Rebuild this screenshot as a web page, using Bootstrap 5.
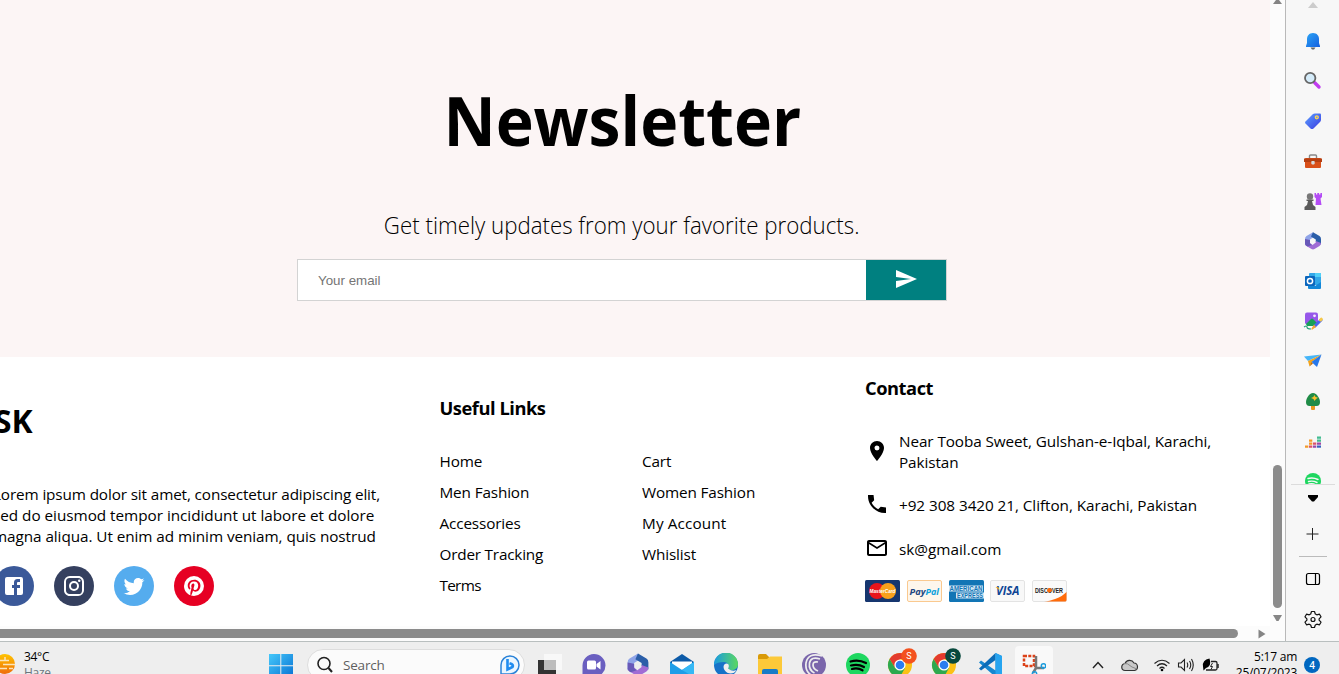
<!DOCTYPE html>
<html lang="en">
<head>
<meta charset="utf-8">
<title>SK Store</title>
<link href="https://cdn.jsdelivr.net/npm/bootstrap@5.3.0/dist/css/bootstrap.min.css" rel="stylesheet">
<script src="https://cdn.jsdelivr.net/npm/bootstrap@5.3.0/dist/js/bootstrap.bundle.min.js"></script>
<style>
  html, body { height: 100%; overflow: hidden; }
  body { font: 400 15.3px/21px "Open Sans", "Noto Sans", sans-serif; color: #000; background: #fff; }
  svg { display: block; flex: none; }
  ul { list-style: none; margin: 0; padding: 0; }
  .browser { height: 641px; }
  .view { width: 1270px; }
  .page { width: 1296px; margin-left: -26px; height: 626px; }

  .newsletter { height: 357px; background: #fcf5f5; padding-top: 75px; }
  .newsletter h1 { font-size: 68px; line-height: 90px; font-weight: 700; margin: 0 0 45px; transform: scaleX(.945); }
  .newsletter p { font-size: 23.6px; line-height: 30px; font-weight: 300; margin: 0 0 19px; transform: scaleX(.945); }
  .mailbox { width: 650px; height: 42px; border: 1px solid lightgray; background: #fff; }
  .mailbox input { border: 0; padding: 1px 0 0 20px; font: 13.33px "Liberation Sans", Arial, sans-serif; outline: 0; }
  .mailbox input::placeholder { color: #757575; opacity: 1; }
  .mailbox button { width: 80px; background: teal; border: 0; padding: 0 0 2px; }

  .foot { display: grid; grid-template-columns: 446px 425px 425px; height: 269px; }
  .foot h3 { font-size: 18.3px; line-height: 25px; font-weight: 700; margin: 0; letter-spacing: -.46px; }
  .brand { padding: 43px 20px 0; }
  .brand h2 { font-size: 31.8px; line-height: 42px; font-weight: 700; margin: 0 0 42px; }
  .brand p { margin: 0 0 19px -1px; }
  .brand p span { display: block; white-space: nowrap; }
  .social { gap: 20px; }
  .social a { width: 40px; height: 40px; border-radius: 50%; }
  .social svg { fill: #fff; }
  .useful { padding: 38px 0 0 19.5px; }
  .useful ul { display: grid; grid-template-columns: 202.5px 1fr; row-gap: 10px; margin-top: 31px; letter-spacing: -.14px; }
  .contact { padding: 18px 0 0 20px; }
  .contact .line { gap: 10px; letter-spacing: -.09px; }
  .pay { gap: 6.8px; margin-top: 20px; }

  .vbar { width: 15px; background: #fcfcfc; }
  .vbar i { width: 9px; height: 143px; border-radius: 5px; background: #8b8b8b; margin: 459px 0 0 3px; }
  .hbar { height: 15px; background: #fcfcfc; }
  .hbar i { width: 1238px; height: 9px; border-radius: 0 5px 5px 0; background: #8b8b8b; }

  .side { width: 54px; background: #f7f7f7; border-left: 1px solid #b9b9b9; }
  .apps { height: 463px; overflow: hidden; padding-left: 1px; }
  .apps li { height: 40px; display: flex; align-items: center; justify-content: center; }

  .taskbar { height: 33px; background: #eee; border-top: 1px solid #b9bfbf; overflow: hidden; line-height: 16px; }
  .taskbar .inner { height: 46px; }
  .slot { width: 44px; height: 46px; display: flex; align-items: center; justify-content: center; }
  .find { width: 218px; height: 32px; border: 1px solid #ddd; border-radius: 16px; background: #fbfbfb; }
  .alert-dot { width: 16px; height: 16px; border-radius: 50%; background: #0067c0; color: #fff; font-size: 10px; font-weight: 600; }
</style>
</head>
<body class="d-flex flex-column">

<div class="browser d-flex">
  <div class="view overflow-hidden">
    <div class="page">
      <section class="newsletter d-flex flex-column align-items-center">
        <h1>Newsletter</h1>
        <p>Get timely updates from your favorite products.</p>
        <form class="mailbox d-flex">
          <input class="flex-grow-1" type="text" placeholder="Your email">
          <button type="button" class="d-flex align-items-center justify-content-center" aria-label="Send">
            <svg width="24" height="24" viewBox="0 0 24 24" fill="#fff"><path d="M2.01 21 23 12 2.01 3 2 10l15 2-15 2z"/></svg>
          </button>
        </form>
      </section>
      <footer class="foot">
        <div class="brand">
          <h2>SK</h2>
          <p><span style="letter-spacing:-.13px">Lorem ipsum dolor sit amet, consectetur adipiscing elit,</span><span style="letter-spacing:-.03px">sed do eiusmod tempor incididunt ut labore et dolore</span><span style="letter-spacing:-.07px">magna aliqua. Ut enim ad minim veniam, quis nostrud</span></p>
          <div class="social d-flex">
            <a class="d-flex align-items-center justify-content-center" style="background:#3b5999"><svg width="24" height="24" viewBox="0 0 24 24"><path d="M5 3h14a2 2 0 0 1 2 2v14a2 2 0 0 1-2 2H5a2 2 0 0 1-2-2V5a2 2 0 0 1 2-2m13 2h-2.5A3.5 3.5 0 0 0 12 8.5V11h-2v3h2v7h3v-7h3v-3h-3V9a1 1 0 0 1 1-1h2V5z"/></svg></a>
            <a class="d-flex align-items-center justify-content-center" style="background:#35405f"><svg width="24" height="24" viewBox="0 0 24 24"><path d="M7.8 2h8.4C19.4 2 22 4.6 22 7.8v8.4a5.8 5.8 0 0 1-5.8 5.8H7.8C4.6 22 2 19.4 2 16.2V7.8A5.8 5.8 0 0 1 7.8 2m-.2 2A3.6 3.6 0 0 0 4 7.6v8.8C4 18.39 5.61 20 7.6 20h8.8a3.6 3.6 0 0 0 3.6-3.6V7.6C20 5.61 18.39 4 16.4 4H7.6m9.65 1.5a1.25 1.25 0 1 1 0 2.5 1.25 1.25 0 0 1 0-2.5M12 7a5 5 0 1 1 0 10 5 5 0 0 1 0-10m0 2a3 3 0 1 0 0 6 3 3 0 0 0 0-6z"/></svg></a>
            <a class="d-flex align-items-center justify-content-center" style="background:#55acee"><svg width="24" height="24" viewBox="0 0 24 24"><path d="M22.46 6c-.77.35-1.6.58-2.46.69.88-.53 1.56-1.37 1.88-2.38-.83.5-1.75.85-2.72 1.05C18.37 4.5 17.26 4 16 4c-2.35 0-4.27 1.92-4.27 4.29 0 .34.04.67.11.98C8.28 9.09 5.11 7.38 3 4.79c-.37.63-.58 1.37-.58 2.15 0 1.49.75 2.81 1.91 3.56-.71 0-1.37-.2-1.95-.5v.03c0 2.08 1.48 3.82 3.44 4.21a4.22 4.22 0 0 1-1.93.07 4.28 4.28 0 0 0 4 2.98 8.521 8.521 0 0 1-5.33 1.84c-.34 0-.68-.02-1.02-.06C3.44 20.29 5.7 21 8.12 21 16 21 20.33 14.46 20.33 8.79c0-.19 0-.37-.01-.56.84-.6 1.56-1.36 2.14-2.23z"/></svg></a>
            <a class="d-flex align-items-center justify-content-center" style="background:#e60023"><svg width="24" height="24" viewBox="0 0 24 24"><path d="M9.04 21.54c.96.29 1.93.46 2.96.46a10 10 0 0 0 10-10A10 10 0 0 0 12 2 10 10 0 0 0 2 12c0 4.25 2.67 7.9 6.44 9.34-.09-.78-.18-2.07 0-2.96l1.15-4.94s-.29-.58-.29-1.5c0-1.38.86-2.41 1.84-2.41.86 0 1.26.63 1.26 1.44 0 .86-.57 2.09-.86 3.27-.17.98.52 1.84 1.52 1.84 1.78 0 3.16-1.9 3.16-4.58 0-2.4-1.72-4.04-4.19-4.04-2.82 0-4.48 2.1-4.48 4.31 0 .86.28 1.73.74 2.3.09.06.09.14.06.29l-.29 1.09c0 .17-.11.23-.28.11-1.28-.56-2.02-2.38-2.02-3.85 0-3.16 2.24-6.03 6.56-6.03 3.44 0 6.12 2.47 6.12 5.75 0 3.44-2.13 6.2-5.18 6.2-.97 0-1.92-.52-2.26-1.13l-.67 2.37c-.23.86-.86 2.01-1.29 2.7v-.03z"/></svg></a>
          </div>
        </div>
        <div class="useful">
          <h3>Useful Links</h3>
          <ul>
            <li>Home</li><li>Cart</li>
            <li>Men Fashion</li><li>Women Fashion</li>
            <li>Accessories</li><li style="letter-spacing:.12px">My Account</li>
            <li style="letter-spacing:-.2px">Order Tracking</li><li>Whislist</li>
            <li style="letter-spacing:-.7px">Terms</li>
          </ul>
        </div>
        <div class="contact">
          <h3>Contact</h3>
          <div class="line d-flex align-items-center" style="margin-top:31px"><svg style="margin-top:-2px" width="24" height="24" viewBox="0 0 24 24"><path d="M12 2C8.13 2 5 5.13 5 9c0 5.25 7 13 7 13s7-7.75 7-13c0-3.87-3.13-7-7-7zm0 9.5a2.5 2.5 0 0 1 0-5 2.5 2.5 0 0 1 0 5z"/></svg><span>Near Tooba Sweet, Gulshan-e-Iqbal, Karachi,<br>Pakistan</span></div>
          <div class="line d-flex align-items-center" style="margin-top:18px;letter-spacing:-.06px"><svg width="24" height="24" viewBox="0 0 24 24"><path d="m21 15.46-5.27-.61-2.52 2.52c-2.83-1.44-5.15-3.75-6.59-6.59l2.53-2.53L8.54 3H3.03C2.45 13.18 10.82 21.55 21 20.97v-5.51z"/></svg><span class="pt-1">+92 308 3420 21, Clifton, Karachi, Pakistan</span></div>
          <div class="line d-flex align-items-center" style="margin-top:19px;letter-spacing:0"><svg width="24" height="24" viewBox="0 0 24 24"><path d="M20 4H4c-1.1 0-2 .9-2 2v12c0 1.1.9 2 2 2h16c1.1 0 2-.9 2-2V6c0-1.1-.9-2-2-2zm0 14H4V8l8 5 8-5v10zm-8-7L4 6h16l-8 5z"/></svg><span class="pt-1">sk@gmail.com</span></div>
          <div class="pay d-flex">
            <svg width="35" height="22" viewBox="0 0 35 22"><rect width="35" height="22" rx="1.5" fill="#16366f"/><circle cx="12" cy="11" r="8" fill="#e8141b"/><circle cx="23" cy="11" r="8" fill="#f9a01b"/><text x="4.500" y="13.400" font-family="Liberation Sans" font-size="6" font-weight="700" font-style="italic" fill="#fff" textLength="26" lengthAdjust="spacingAndGlyphs">MasterCard</text></svg>
            <svg width="35" height="22" viewBox="0 0 35 22"><rect x=".5" y=".5" width="34" height="21" rx="1.5" fill="#fdf6ec" stroke="#fac98f"/><text x="2.5" y="14.5" font-family="Open Sans" font-size="9.5" font-weight="700" font-style="italic" fill="#20457f" textLength="16" lengthAdjust="spacingAndGlyphs">Pay</text><text x="18.500" y="14.5" font-family="Open Sans" font-size="9.5" font-weight="700" font-style="italic" fill="#0aa0dc" textLength="13.500" lengthAdjust="spacingAndGlyphs">Pal</text></svg>
            <svg width="35" height="22" viewBox="0 0 35 22"><rect width="35" height="22" rx="1.5" fill="#1275b5"/><path d="M0 5.500h34v6H0z M7 12.500h28v6H7z" fill="#d3e8f5"/><text x="0.500" y="11" font-family="Liberation Sans" font-size="7" font-weight="700" fill="#1275b5" textLength="33" lengthAdjust="spacingAndGlyphs">AMERICAN</text><text x="8" y="18" font-family="Liberation Sans" font-size="7" font-weight="700" fill="#1275b5" textLength="26" lengthAdjust="spacingAndGlyphs">EXPRESS</text></svg>
            <svg width="35" height="22" viewBox="0 0 35 22"><rect x=".5" y=".5" width="34" height="21" rx="1.5" fill="#f8f8f8" stroke="#e3e3e3"/><text x="6" y="15.3" font-family="Open Sans" font-size="11.5" font-weight="700" font-style="italic" fill="#0e4595" textLength="23.5" lengthAdjust="spacingAndGlyphs">VISA</text><path d="m5.5 7 3 .2 1 3z" fill="#f2ae14"/></svg>
            <svg width="35" height="22" viewBox="0 0 35 22"><rect x=".5" y=".5" width="34" height="21" rx="1.5" fill="#fafafa" stroke="#e3e3e3"/><path d="M34.5 12C29 18 19 21 12 21.5h21q1.500 0 1.500-1.500z" fill="#ff6b0a"/><text x="3" y="12.500" font-family="Liberation Sans" font-size="6.600" font-weight="700" fill="#222" textLength="28" lengthAdjust="spacingAndGlyphs">DISCOVER</text><circle cx="17.500" cy="10.200" r="2.300" fill="#ff6b0a"/></svg>
          </div>
        </div>
      </footer>
    </div>
    <div class="hbar d-flex align-items-center"><i></i></div>
  </div>
  <div class="vbar d-flex flex-column">
    <svg width="15" height="6" viewBox="0 0 15 6"><path d="M7.500 -2 12 4H3z" fill="#858585"/></svg>
    <i></i>
    <svg class="mt-1" width="15" height="12" viewBox="0 0 15 12"><path d="M3 3h9L8.500 9h-2z" fill="#858585"/></svg>
    <svg style="margin:4px 0 0 -14px" width="15" height="12" viewBox="0 0 15 12"><path d="M2.500 1.500v9L9.500 6z" fill="#858585"/></svg>
  </div>

  <aside class="side">
    <svg width="53" height="21" viewBox="0 0 53 21"><path d="m27 2 5 6H22z" fill="#ccc"/></svg>
    <ul class="apps">
      <li><svg width="20" height="20" viewBox="0 0 20 20"><defs><linearGradient id="bell" x2="1" y2="1"><stop stop-color="#2ba5f5"/><stop offset="1" stop-color="#1660e0"/></linearGradient></defs><path d="M10 2C6 2 4 5 4 8v4l-1 3v1h14v-1l-1-3V8c0-3-2-6-6-6z" fill="url(#bell)"/><path d="M7.500 16.500h5l-1.500 2H9z" fill="#666"/></svg></li>
      <li><svg width="20" height="20" viewBox="0 0 20 20"><path d="m11.500 11.500 4.500 4.500" stroke="#c03cf0" stroke-width="3.400" stroke-linecap="round"/><circle cx="7.200" cy="7" r="5.200" fill="#d5ecfa" stroke="#666" stroke-width="1.800"/></svg></li>
      <li><svg width="20" height="20" viewBox="0 0 20 20"><defs><linearGradient id="tag" x2="1" y2="1"><stop stop-color="#5ba0ff"/><stop offset="1" stop-color="#3b3be0"/></linearGradient></defs><path d="m2.500 10.500 7-7q1-1 2.500-1h5q1 0 1 1v5q0 1.500-1 2.500l-6.500 6.500q-1.500 1-3 0l-5-5q-1-1 0-2z" fill="url(#tag)"/><circle cx="13.800" cy="6.300" r="1.500" fill="#6e8cf8" stroke="#ffd84a" stroke-width="1.300"/></svg></li>
      <li><svg width="20" height="20" viewBox="0 0 20 20"><path d="M6.500 7V5q0-1 1-1h5q1 0 1 1v2" fill="none" stroke="#888" stroke-width="1.400"/><rect x="2" y="7" width="16" height="10" rx="1" fill="#d9501a"/><path d="M1 7.500h18v3.500H1z" fill="#b53f12"/><rect x="8.300" y="10" width="3.400" height="3.400" rx=".8" fill="#d5d8da"/></svg></li>
      <li><svg width="20" height="20" viewBox="0 0 20 20"><path d="M11.500 2H13v1.500h1.300V2h1.800v1.500h1.300V2H19v4l-1.500 1.500L18.500 14h-6L13 7.500 11.500 6z" fill="#b44cf5"/><circle cx="7" cy="5.500" r="3.200" fill="#777"/><path d="M3.500 8.500h7v1.500H9l1 4 2.500 2v3H1.500v-3l2.500-2 1-4H3.500z" fill="#5a5a5a"/></svg></li>
      <li><svg width="20" height="20" viewBox="0 0 20 20"><g id="m365"><path d="M10 1.200 3.500 5Q2 6 2 8v6l5-1.500V8.500L12.500 5z" fill="#8fa4e8"/><path d="m10 1.200 6.500 3.800Q18 6 18 8v5.500L12.800 11V8.500L8 5.500z" fill="#2b5ea8"/><path d="M2 12.500q0 1.500 1.500 2.500L8.500 18q1.500.9 3 0l5-3q1.500-1 1.500-3l-5.200-2v1.500L9.500 14 7 12z" fill="#a06cd5"/><path d="m2 8 5 1v3.500L9 14l-4.500 1.500Q2 14.500 2 12.500z" fill="#6859b8"/></g></svg></li>
      <li><svg width="20" height="20" viewBox="0 0 20 20"><rect x="6" y="2" width="12" height="12" rx="1" fill="#32a7e8"/><path d="M12 2h6v4h-6z" fill="#50d0f8"/><path d="m5 11 7 4 6-4v6q0 1-1 1H6q-1 0-1-1z" fill="#1387d8"/><rect x="2" y="5" width="10" height="10" rx="1" fill="#0a66bd"/><circle cx="7" cy="10" r="2.600" fill="none" stroke="#fff" stroke-width="1.500"/></svg></li>
      <li><svg width="20" height="20" viewBox="0 0 20 20"><rect x="2" y="1.500" width="13" height="12" rx="2" fill="#9657ea"/><circle cx="11.500" cy="4.800" r="1.400" fill="#f3e8ff"/><path d="m3 13 5-5q1-1 2 0l4 4-2 3H4z" fill="#18a058"/><path d="m18 9-6 6" stroke="#4766ee" stroke-width="3" stroke-linecap="round"/><path d="m17.500 9 .800-.8" stroke="#f7c948" stroke-width="3" stroke-linecap="round"/><path d="m11 13.500-2.500 4q-.5 1.500 1 1l3.500-2.500z" fill="#f3a536"/><path d="M1 16q3-2 3 0t4 2" fill="none" stroke="#28a37a" stroke-width="1.200"/></svg></li>
      <li><svg width="20" height="20" viewBox="0 0 20 20"><path d="M18.500 3.500 1 5.500 5 10z" fill="#45b5f8"/><path d="M18.500 3.500 5 10l1.500 5.500L9 11z" fill="#f3a41c"/><path d="M18.500 3.500 8.500 11l5.500 5z" fill="#2677ea"/><path d="m6.500 15.500 3.500-3-1.500-1.500z" fill="#bd6e10"/></svg></li>
      <li><svg width="20" height="20" viewBox="0 0 20 20"><path d="M8 13h4v5.500q-2 1-4 0z" fill="#e99a20"/><path d="M10 2c4 0 7 6 7 9q0 4-3.500 4h-7Q3 15 3 11c0-3 3-9 7-9z" fill="#208c47"/><path d="m11.500 4 1 2 2.500.7-2 1.400-1.500 2-1-2.200L8 7l2.300-1z" fill="#fbc02d"/></svg></li>
      <li><svg width="20" height="20" viewBox="0 0 20 20"><path d="M2 14.500h3.300v2.200H2zM6 11.500h3.300v2.200H6zM6 8.500h3.300v2.200H6z" fill="#f49a28"/><path d="M6 14.500h3.300v2.200H6zM10 11.500h3.300v2.200H10z" fill="#dc5368"/><path d="M10 14.500h3.300v2.200H10zM14 11.500h4v2.200h-4z" fill="#9a48a8"/><path d="M14 14.500h4v2.200h-4z" fill="#3862bd"/><path d="M14 8.500h4v2.200h-4zM14 5.500h4v2.200h-4z" fill="#42bc90"/></svg></li>
      <li><svg width="20" height="20" viewBox="0 0 20 20"><circle cx="10" cy="10" r="8" fill="#1ed760"/><path d="M5 7.500q5-1.500 10 1M5.500 10.500q4.500-1 8.500 1M6 13q4-1 7 1" fill="none" stroke="#f7f7f7" stroke-width="1.400" stroke-linecap="round"/></svg></li>
    </ul>
    <svg width="53" height="157" viewBox="0 0 53 157"><path d="M13 72.500h28" stroke="#bbb"/><path d="M5 -.5h44" stroke="#d0d0d0"/><path d="M5 .2h44" stroke="#d0d0d0"/><path d="M22 11h10v2l-4 4.500h-2L22 13z" fill="#000"/><path d="M26.500 44v12M20.500 50h12" stroke="#222"/><rect x="20.500" y="89.500" width="13" height="11" rx="2" fill="none" stroke="#000" stroke-width="1.200"/><path d="M29.500 89.500v11" stroke="#000" stroke-width="1.200"/>
      <g fill="none" stroke="#111" stroke-width="1.200" stroke-linejoin="round"><path d="m25.500 127.500 3 0 .8 2.500 1.500.8 2.700-.6 1.500 2.600-1.900 2v1.400l1.900 2-1.500 2.600-2.700-.6-1.500.8-.8 2.500h-3l-.8-2.500-1.500-.8-2.700.6-1.500-2.600 1.900-2v-1.400l-1.900-2 1.500-2.600 2.700.6 1.500-.8z"/><circle cx="27" cy="135.500" r="2"/></g></svg>
  </aside>
</div>

<div class="taskbar">
  <div class="inner d-flex align-items-center">
    <svg width="15" height="22" viewBox="0 0 15 22"><defs><linearGradient id="sun" x2="0" y2="1"><stop stop-color="#ffc400"/><stop offset="1" stop-color="#ef6c0a"/></linearGradient></defs><circle cx="5" cy="10" r="10" fill="url(#sun)"/><path d="M-1 6.500h10M3 10.500h12M-1 14.500h8M9 14.500h4M5 3v3" stroke="#fbe5bd" stroke-width="1.500"/></svg>
    <div style="width:245px;padding:0 0 0 9px;font-size:12px;letter-spacing:-.3px"><div>34°C</div><div class="text-secondary">Haze</div></div>
    <svg width="47" height="24" viewBox="0 0 47 24"><defs><linearGradient id="win" x2="1" y2="1"><stop stop-color="#45c8fa"/><stop offset="1" stop-color="#0871d3"/></linearGradient></defs><path d="M9 1h11.300v11.300H9zM21.300 1h11.700v11.300H21.300zM9 13.300h11.300V25H9zM21.300 13.300H33V25H21.300z" fill="url(#win)"/></svg>
    <div class="find d-flex align-items-center px-2">
      <svg style="margin-left:-1px" width="20" height="20" viewBox="0 0 20 20"><circle cx="9" cy="8.500" r="6" fill="none" stroke="#222" stroke-width="1.600"/><path d="m13.500 13 3.500 4" stroke="#222" stroke-width="2"/></svg>
      <span class="flex-grow-1" style="padding-left:8px;font-size:13.500px;letter-spacing:-.2px;color:#5f5f5f">Search</span>
      <svg style="margin-right:-5px" width="22" height="22" viewBox="0 0 22 22"><path d="M2 20v-9a9 9 0 1 1 9 9z" fill="#eaf6ff" stroke="#2b83d8" stroke-width="1.500"/><path d="M8.500 5v10.500l5-2.500q1-2-1-3l-2-.7" fill="none" stroke="#1f8cf0" stroke-width="2.600"/></svg>
    </div>
    <div class="slot" style="margin-left:3px"><svg width="24" height="24" viewBox="0 0 24 24"><path d="M0 7h18v17H0z" fill="#333"/><path d="M6 1h18v16H6z" fill="#f8f8f8"/><path d="M6 7h12v10H6z" fill="#bcbcbc"/></svg></div>
    <div class="slot"><svg width="24" height="24" viewBox="0 0 24 24"><path d="M.5 24V12.500A11.500 11.500 0 1 1 12.500 24z" fill="#6a5fc0"/><rect x="5" y="7.500" width="9" height="9" rx="1.500" fill="#fff"/><path d="m14.500 11 4-3v8.500l-4-3z" fill="#fff"/></svg></div>
    <div class="slot"><svg width="26" height="26" viewBox="0 0 20 20"><use href="#m365"/></svg></div>
    <div class="slot"><svg width="24" height="24" viewBox="0 0 24 24"><path d="m0 9 12-8 12 8v5H0z" fill="#0d5aa7"/><path d="M2 8.500h20V16H2z" fill="#fff"/><path d="m0 9 12 8 12-8v15H0z" fill="#1f9ee8"/><path d="m12 17 12-8v15z" fill="#35b8f5"/></svg></div>
    <div class="slot"><svg width="24" height="24" viewBox="0 0 24 24"><defs><linearGradient id="edge" x2="1"><stop stop-color="#1a9ae0"/><stop offset="1" stop-color="#5bd860"/></linearGradient></defs><circle cx="12" cy="12" r="12" fill="#1672c8"/><path d="M0 12a12 12 0 0 1 24-1c0 4-3 6-6 6-2 0-4-.5-4-1.500 1-1 1.500-6-4-6.500Q3 9 0 12z" fill="url(#edge)"/><path d="M14 15.500c1.500-2 1-5-1.500-5s-4 3-2 6.500 6 4 9 3q2-1 3-3-4 2-8.500-1.500z" fill="#eee"/></svg></div>
    <div class="slot"><svg width="24" height="24" viewBox="0 0 24 24"><path d="M0 3q0-2 2-2h6l3 3v4H0z" fill="#d99a08"/><path d="M0 6h9l3-2.500h12V24H0z" fill="#fcc939"/><rect x="4" y="16" width="16" height="8" rx="2" fill="#187bc7"/></svg></div>
    <div class="slot"><svg width="24" height="24" viewBox="0 0 24 24"><circle cx="12" cy="12" r="12" fill="#7a66ab"/><g fill="none" stroke="#eee" stroke-width="1.700"><path d="M20 3Q6-1 4 10q-1 8 5 12"/><path d="M18 6Q9 3 7.500 10q-1 7 5 10"/><path d="M16 9q-5-1-5 3 0 4 5 6"/></g></svg></div>
    <div class="slot"><svg width="24" height="24" viewBox="0 0 24 24"><circle cx="12" cy="12" r="12" fill="#1ed760"/><path d="M4.500 8.500q8-2.500 15.500 1.500M5 12.500q7-2 13 1.500M6 16q6-1.500 10.500 1.300" fill="none" stroke="#000" stroke-width="2.200" stroke-linecap="round"/></svg></div>
    <div class="slot"><svg width="30" height="36" viewBox="1 0 30 36"><g id="chrome"><circle cx="14" cy="18" r="12" fill="#fbc116"/><path d="M3.600 12A12 12 0 0 1 24.400 12H14l-5 9z" fill="#e33b2e"/><path d="M3.600 12A12 12 0 0 0 14 30l5-9H9z" fill="#2da94f"/><circle cx="14" cy="18" r="5.600" fill="#fff"/><circle cx="14" cy="18" r="4.300" fill="#2b7cf0"/></g><circle cx="23" cy="9" r="7.800" fill="#f4511e"/><text x="23" y="12.300" font-family="Roboto" font-size="9" fill="#fff" text-anchor="middle">S</text></svg></div>
    <div class="slot"><svg width="30" height="36" viewBox="1 0 30 36"><use href="#chrome"/><circle cx="23" cy="9" r="7.800" fill="#08493d"/><text x="23" y="12.300" font-family="Roboto" font-size="9" fill="#fff" text-anchor="middle">S</text></svg></div>
    <div class="slot"><svg width="24" height="24" viewBox="0 0 24 24"><path d="M17.500 0 24 3v18l-6.500 3L1 9.500l2-2 14.500 10z" fill="#1587d0"/><path d="M17.500 0v7L3 17.500l-2-2z" fill="#0a6cb8"/><path d="M17.500 0 24 3v18l-6.500 3z" fill="#25a4f0"/></svg></div>
    <div class="slot" style="width:38px;height:38px;margin-left:3px;background:#f9f9f9;border-radius:4px"><svg width="24" height="24" viewBox="0 0 24 24"><rect x="2" y="3" width="10" height="10" fill="none" stroke="#dc4218" stroke-width="2.500" stroke-dasharray="3 1.300"/><path d="M14 3v12h8M14 15l-3 5" fill="none" stroke="#777" stroke-width="2.500"/><circle cx="21.500" cy="13" r="2.200" fill="none" stroke="#199bdd" stroke-width="1.500"/><circle cx="12.500" cy="21" r="2.200" fill="none" stroke="#199bdd" stroke-width="1.500"/></svg></div>
    <svg style="margin-left:38px" width="14" height="12" viewBox="0 0 14 12"><path d="m2 9 5-5.500L12 9" fill="none" stroke="#222" stroke-width="1.400"/></svg>
    <svg style="margin-left:16px" width="18" height="14" viewBox="0 0 18 14"><path d="M4.500 12.500a3.500 3.500 0 0 1-.5-7 5 5 0 0 1 9-.5 3.800 3.800 0 0 1 .5 7.500z" fill="#c9c9c9" stroke="#333" stroke-width="1.200"/><path d="M3 5.500q3-1 8 3.500l5 2" fill="none" stroke="#888"/></svg>
    <svg style="margin-left:14px" width="18" height="16" viewBox="0 0 18 16"><g fill="none" stroke="#222" stroke-width="1.200"><path d="M1.500 6.500q7.500-6.500 15 0M4 9q5-4.500 10 0M6.500 11.500q2.500-2.500 5 0"/></g><circle cx="9" cy="13" r="1.300"/></svg>
    <svg style="margin-left:6px" width="18" height="16" viewBox="0 0 18 16"><g fill="none" stroke="#222" stroke-width="1.100"><path d="M1.500 6h2.500l3.500-3.500v11L4 10H1.500zM10 5.500q1.500 2.500 0 5M12.500 4q2.500 4 0 8M14.500 2q3.500 6 0 12"/></g></svg>
    <svg style="margin-left:6px" width="20" height="16" viewBox="0 0 20 16"><path d="M10 4.500h4.500q1.500 0 1.500 1.500v5.500q0 1.500-1.500 1.500H5" fill="none" stroke="#222" stroke-width="1.300"/><path d="M17 7v4" stroke="#222" stroke-width="1.500"/><path d="M2 9.500Q1 3 8.500 1.500 11 9 5 11L2.500 13.500z"/><path d="m11.500 6-2 3.500h2l-1.500 3" fill="none" stroke="#222"/></svg>
    <div class="text-end" style="width:76px;font-size:12px;letter-spacing:-.25px"><div>5:17 am</div><div>25/07/2023</div></div>
    <div class="alert-dot d-flex align-items-center justify-content-center" style="margin-left:7px">4</div>
  </div>
</div>
</body>
</html>
